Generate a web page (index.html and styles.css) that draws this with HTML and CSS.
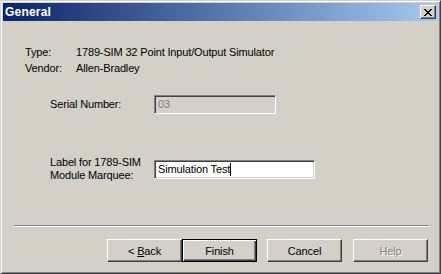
FILE: index.html
```html
<!DOCTYPE html>
<html lang="en">
<head>
    <meta charset="UTF-8">
    <title>General</title>
    <link rel="stylesheet" href="styles.css">
</head>
<body>
    <div class="window">
        <div class="titlebar">
            <span class="title">General</span>
            <button class="close-btn" aria-label="Close">
                <svg width="8" height="7" viewBox="0 0 8 7" shape-rendering="crispEdges">
                    <path d="M0 0h2v1h-2zM6 0h2v1h-2zM1 1h2v1h-2zM5 1h2v1h-2zM2 2h4v1h-4zM3 3h2v1h-2zM2 4h4v1h-4zM1 5h2v1h-2zM5 5h2v1h-2zM0 6h2v1h-2zM6 6h2v1h-2z" fill="#000"/>
                </svg>
            </button>
        </div>
        <div class="content">
            <div class="info">
                <span>Type:</span><span>1789-SIM 32 Point Input/Output Simulator</span>
                <span>Vendor:</span><span>Allen-Bradley</span>
            </div>
            <div class="field serial">
                <label>Serial Number:</label>
                <div class="textbox disabled short">03</div>
            </div>
            <div class="field marquee">
                <label>Label for 1789-SIM<br>Module Marquee:</label>
                <div class="textbox long">Simulation Test<span class="caret"></span></div>
            </div>
            <div class="separator"></div>
            <div class="buttons">
                <div class="pair">
                    <button class="btn">&lt; <u>B</u>ack</button>
                    <button class="btn default">Finish</button>
                </div>
                <button class="btn">Cancel</button>
                <button class="btn disabled">Help</button>
            </div>
        </div>
    </div>
</body>
</html>
```

FILE: styles.css
```css
body {
    margin: 0;
    background: #d4d0c8;
    font-family: 'Liberation Sans', Arial, sans-serif;
    font-size: 11px;
    letter-spacing: -0.15px;
    color: #000;
}

.window {
    width: 441px;
    height: 274px;
    box-sizing: border-box;
    background: #d4d0c8;
    border: 1px solid;
    border-color: #d4d0c8 #404040 #404040 #d4d0c8;
    box-shadow: inset 1px 1px #fff, inset -1px -1px #808080;
    padding: 2px;
    display: flex;
    flex-direction: column;
}

.titlebar {
    height: 18px;
    background: linear-gradient(to right, #0a246a, #a6caf0);
    display: flex;
    align-items: center;
    justify-content: space-between;
    padding: 0 2px 0 2px;
}

.title {
    color: #fff;
    font-weight: bold;
    font-size: 12px;
    letter-spacing: 0.2px;
}

.close-btn {
    width: 16px;
    height: 14px;
    padding: 0;
    background: #d4d0c8;
    border: 1px solid;
    border-color: #fff #404040 #404040 #fff;
    box-shadow: inset -1px -1px #808080;
    display: flex;
    align-items: center;
    justify-content: center;
}

.content {
    flex: 1;
}

.info {
    display: grid;
    grid-template-columns: 51px auto;
    line-height: 16px;
    margin: 23px 0 0 22px;
}

.field {
    display: flex;
    align-items: center;
    padding-left: 47px;
}

.field label {
    width: 104px;
    line-height: 13px;
}

.serial {
    margin-top: 19px;
}

.marquee {
    margin-top: 42px;
}

.textbox {
    height: 19px;
    box-sizing: border-box;
    border: 1px solid;
    border-color: #808080 #fff #fff #808080;
    box-shadow: inset 1px 1px #404040, inset -1px -1px #d4d0c8;
    background: #fff;
    padding: 0 3px;
    line-height: 17px;
    display: flex;
    align-items: center;
}

.textbox.short {
    width: 122px;
}

.textbox.long {
    width: 161px;
}

.textbox.disabled {
    background: #d4d0c8;
    color: #808080;
}

.caret {
    display: inline-block;
    width: 1px;
    height: 13px;
    background: #000;
}

.separator {
    margin: 43px 10px 0 11px;
    height: 1px;
    border-top: 1px solid #808080;
    background: #fff;
}

.buttons {
    display: flex;
    justify-content: flex-end;
    gap: 10px;
    margin: 12px 10px 0 0;
}

.buttons .btn + .btn {
    margin-left: 1px;
}

.pair {
    display: flex;
}

.btn {
    width: 75px;
    height: 23px;
    box-sizing: border-box;
    font-family: 'Liberation Sans', Arial, sans-serif;
    font-size: 11px;
    letter-spacing: -0.15px;
    color: #000;
    background: #d4d0c8;
    border: 1px solid;
    border-color: #fff #404040 #404040 #fff;
    box-shadow: inset -1px -1px #808080;
    padding: 0;
}

.pair .btn + .btn {
    margin-left: 0;
}

.btn.default {
    border: 1px solid #000;
    box-shadow: inset 1px 1px #fff, inset -1px -1px #404040, inset -2px -2px #808080;
}

.btn.disabled {
    color: #808080;
    text-shadow: 1px 1px #fff;
}
```
